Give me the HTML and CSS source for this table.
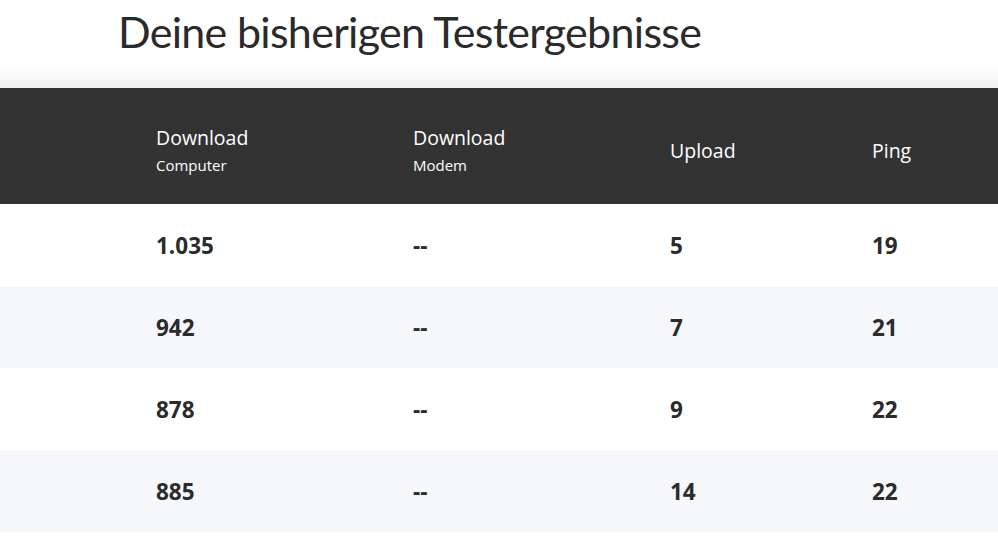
FILE: index.html
```html
<!DOCTYPE html>
<html lang="de">
<head>
<meta charset="utf-8">
<link rel="stylesheet" href="styles.css">
</head>
<body>
<div class="page">
  <h1 class="title">Deine bisherigen Testergebnisse</h1>
  <div class="shade"></div>
  <div class="table">
    <div class="row head">
      <div class="cell"><span class="main">Download</span><span class="sub">Computer</span></div>
      <div class="cell"><span class="main">Download</span><span class="sub">Modem</span></div>
      <div class="cell"><span class="main">Upload</span></div>
      <div class="cell"><span class="main">Ping</span></div>
    </div>
    <div class="row">
      <div class="cell">1.035</div><div class="cell">--</div><div class="cell">5</div><div class="cell">19</div>
    </div>
    <div class="row alt">
      <div class="cell">942</div><div class="cell">--</div><div class="cell">7</div><div class="cell">21</div>
    </div>
    <div class="row">
      <div class="cell">878</div><div class="cell">--</div><div class="cell">9</div><div class="cell">22</div>
    </div>
    <div class="row alt">
      <div class="cell">885</div><div class="cell">--</div><div class="cell">14</div><div class="cell">22</div>
    </div>
  </div>
</div>
</body>
</html>
```
FILE: styles.css
```css
html, body {
  margin: 0;
  padding: 0;
  background: #fff;
}
.page {
  width: 998px;
  font-family: "Open Sans", "Liberation Sans", sans-serif;
  color: #2b2b2b;
}
.title {
  margin: 0;
  padding: 6px 0 0 118px;
  height: 64px;
  box-sizing: border-box;
  font-family: Lato, "Open Sans", sans-serif;
  font-weight: 400;
  font-size: 43px;
  line-height: 52px;
  color: #2a2a2a;
  letter-spacing: -0.7px;
}
.shade {
  height: 24px;
  background: linear-gradient(#ffffff, #f1f1f1);
}
.row {
  display: grid;
  grid-template-columns: 257px 257px 202px 1fr;
  padding-left: 156px;
  height: 82px;
  align-items: center;
  font-weight: 700;
  font-size: 22.5px;
  color: #2b2b2b;
}
.row.alt {
  background: #f6f7fb;
}
.row.head {
  box-sizing: border-box;
  height: 116px;
  padding-top: 10px;
  background: #333333;
  color: #fff;
  font-weight: 400;
}
.head .cell {
  display: flex;
  flex-direction: column;
}
.head .main {
  font-size: 19.5px;
  line-height: 28px;
}
.head .sub {
  font-size: 15px;
  line-height: 26px;
}
```
